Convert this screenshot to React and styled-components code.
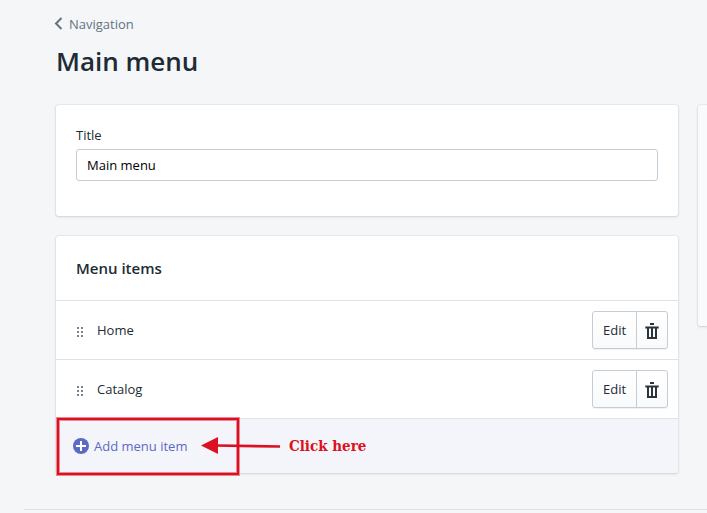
import React, { useState } from "react";
import styled, { createGlobalStyle } from "styled-components";

const GlobalStyle = createGlobalStyle`
  *, *::before, *::after { box-sizing: border-box; }
  body {
    margin: 0;
    background: #f4f6f8;
    color: #212b36;
    font: 400 13px/20px "Open Sans", "Noto Sans", sans-serif;
  }
  button, input { font: inherit; color: inherit; }
`;

const Page = styled.div`
  padding-top: 14px;
  overflow: hidden;
`;

const Header = styled.header`
  padding: 0 56px;
`;

const Breadcrumb = styled.a`
  display: inline-flex;
  align-items: center;
  gap: 6px;
  margin-left: -2px;
  color: #637381;
  text-decoration: none;
  svg { display: block; }
`;

const PageTitle = styled.h1`
  margin: 5px 0 24px;
  font-size: 26px;
  line-height: 40px;
  font-weight: 600;
`;

const Layout = styled.div`
  display: grid;
  grid-template-columns: minmax(0, 1fr) 9px;
  gap: 20px;
  align-items: start;
  padding-left: 56px;
`;

const Column = styled.main`
  display: grid;
  gap: 20px;
`;

const Card = styled.section`
  background: #fff;
  border-radius: 3px;
  box-shadow: 0 0 0 1px rgba(63, 63, 68, 0.05), 0 1px 3px 0 rgba(63, 63, 68, 0.15);
`;

const SideCard = styled.aside`
  width: 300px;
  height: 221px;
  background: #f9fafb;
  border-radius: 3px;
  box-shadow: 0 0 0 1px rgba(63, 63, 68, 0.05), 0 1px 3px 0 rgba(63, 63, 68, 0.15);
`;

const Field = styled.div`
  padding: 20px 20px 35px;
`;

const Label = styled.label`
  display: block;
  margin-bottom: 4px;
`;

const TextInput = styled.input`
  display: block;
  width: 100%;
  height: 32px;
  padding: 0 10px;
  border: 1px solid #c4cdd5;
  border-radius: 3px;
  background: #fff;
  color: #000;
`;

const CardTitle = styled.h2`
  margin: 0;
  padding: 22px 20px;
  font-size: 15px;
  line-height: 20px;
  font-weight: 600;
`;

const Items = styled.ul`
  margin: 0;
  padding: 0;
  list-style: none;
`;

const Item = styled.li`
  display: flex;
  align-items: center;
  padding: 10px 10px 10px 20px;
  border-top: 1px solid #dfe3e8;
`;

const Grip = styled.svg`
  display: block;
  margin-top: 4px;
  margin-right: 13px;
`;

const ItemName = styled.span`
  flex: 1;
`;

const ButtonGroup = styled.div`
  display: flex;
`;

const GroupButton = styled.button`
  display: flex;
  align-items: center;
  justify-content: center;
  width: ${(p) => (p.$icon ? 32 : 45)}px;
  height: 38px;
  padding: 0;
  border: 1px solid #c4cdd5;
  border-radius: 3px 0 0 3px;
  background: linear-gradient(to bottom, #fff, #f9fafb);
  box-shadow: 0 1px 0 0 rgba(22, 29, 37, 0.05);
  cursor: pointer;
  & + & {
    margin-left: -1px;
    padding-top: 2px;
    border-radius: 0 3px 3px 0;
  }
`;

const AddRow = styled.div`
  position: relative;
  padding: 17px;
  border-top: 1px solid #dfe3e8;
  border-radius: 0 0 3px 3px;
  background: #f4f5fa;
`;

const AddButton = styled.button`
  display: flex;
  align-items: center;
  gap: 5px;
  padding: 0;
  border: 0;
  background: none;
  color: #5c6ac4;
  line-height: 20px;
  cursor: pointer;
`;

const Highlight = styled.div`
  position: absolute;
  top: -1px;
  left: 1px;
  width: 182px;
  height: 57px;
  border: 2px solid #db1020;
  box-shadow: 0 0 0 1px #e98792, inset 0 0 0 1px #e98792;
  pointer-events: none;
`;

const Callout = styled.div`
  position: absolute;
  top: 17px;
  left: 145px;
  display: flex;
  align-items: center;
  gap: 9px;
  color: #db1020;
  font: 700 15px/20px "DejaVu Serif Condensed", "DejaVu Serif", serif;
  white-space: nowrap;
  pointer-events: none;
`;

const Divider = styled.hr`
  margin: 36px 0 0 24px;
  border: 0;
  border-top: 1px solid #dfe3e8;
`;

const ChevronIcon = () => (
  <svg width="9" height="14" viewBox="0 0 9 14" fill="none" aria-hidden="true">
    <path d="M7.5 1 2 6.5 7.5 12" stroke="#637381" strokeWidth="2" />
  </svg>
);

const GripIcon = () => (
  <Grip width="8" height="10" viewBox="0 0 8 10" fill="#738392" aria-hidden="true">
    {[0, 4, 8].map((y) => (
      <React.Fragment key={y}>
        <rect x="1" y={y} width="2" height="2" />
        <rect x="5" y={y} width="2" height="2" />
      </React.Fragment>
    ))}
  </Grip>
);

const TrashIcon = () => (
  <svg width="20" height="20" viewBox="0 0 20 20" fill="#2b333d" aria-hidden="true">
    <path
      fillRule="evenodd"
      d="M8 2h4v2H8zM3.3 5.5h13.4v2H15V18H5V7.5H3.3zM7 7.5V16h2V7.5zM11 7.5V16h2V7.5z"
    />
  </svg>
);

const PlusIcon = () => (
  <svg width="16" height="16" viewBox="0 0 16 16" aria-hidden="true">
    <circle cx="8" cy="8" r="8" fill="#5c6ac4" />
    <path d="M8 3v10M3 8h10" stroke="#fff" strokeWidth="2" />
  </svg>
);

const ArrowIcon = () => (
  <svg width="79" height="18" viewBox="0 0 79 18" fill="#db1020" aria-hidden="true">
    <path d="M0 8.5 17 0v17z" />
    <path d="M15 8.5 79 9.5" stroke="#db1020" strokeWidth="2.6" />
  </svg>
);

const menuItems = ["Home", "Catalog"];

export default function App() {
  const [title, setTitle] = useState("Main menu");
  return (
    <>
      <GlobalStyle />
      <Page>
        <Header>
          <Breadcrumb href="#navigation">
            <ChevronIcon />
            Navigation
          </Breadcrumb>
          <PageTitle>Main menu</PageTitle>
        </Header>
        <Layout>
          <Column>
            <Card>
              <Field>
                <Label htmlFor="menu-title">Title</Label>
                <TextInput
                  id="menu-title"
                  value={title}
                  onChange={(e) => setTitle(e.target.value)}
                />
              </Field>
            </Card>
            <Card>
              <CardTitle>Menu items</CardTitle>
              <Items>
                {menuItems.map((name) => (
                  <Item key={name}>
                    <GripIcon />
                    <ItemName>{name}</ItemName>
                    <ButtonGroup>
                      <GroupButton type="button">Edit</GroupButton>
                      <GroupButton type="button" $icon aria-label={`Delete ${name}`}>
                        <TrashIcon />
                      </GroupButton>
                    </ButtonGroup>
                  </Item>
                ))}
              </Items>
              <AddRow>
                <AddButton type="button">
                  <PlusIcon />
                  Add menu item
                </AddButton>
                <Highlight />
                <Callout>
                  <ArrowIcon />
                  Click here
                </Callout>
              </AddRow>
            </Card>
          </Column>
          <SideCard />
        </Layout>
        <Divider />
      </Page>
    </>
  );
}
